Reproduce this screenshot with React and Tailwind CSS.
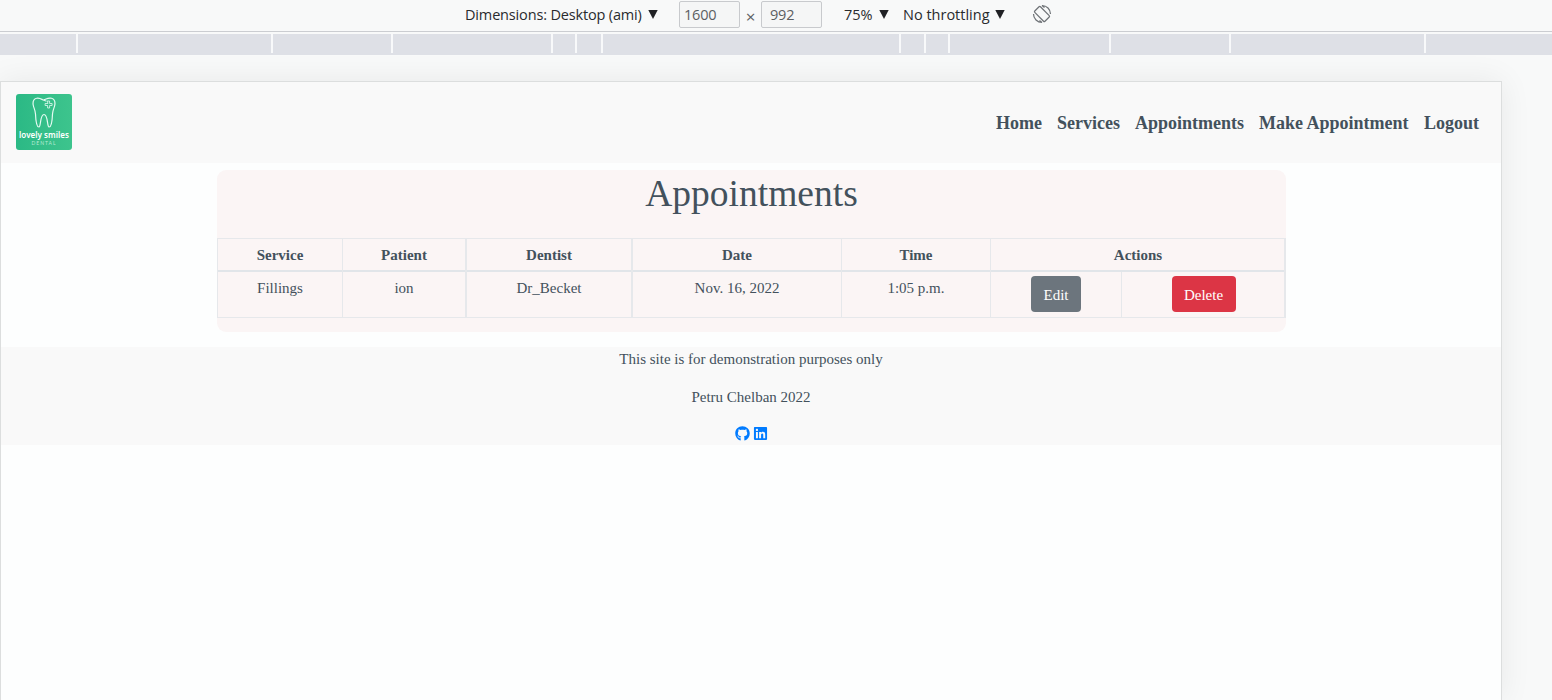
import React from "react";
import { FaGithub, FaLinkedin } from "react-icons/fa";

const ruler = [
  ["w-[76px]", true],
  ["w-[193px]", true],
  ["w-[118px]", true],
  ["w-[158px]", true],
  ["w-[22px]", true],
  ["w-[24px]", true],
  ["w-[296px]", true],
  ["w-[23px]", true],
  ["w-[22px]", true],
  ["w-[159px]", true],
  ["w-[118px]", true],
  ["w-[193px]", true],
  ["w-[126px]", false],
];

const columns = [
  ["Service", "Fillings", "w-[125px]", "border-l"],
  ["Patient", "ion", "w-[123px]", "border-l"],
  ["Dentist", "Dr_Becket", "w-[166px]", "border-l-2"],
  ["Date", "Nov. 16, 2022", "w-[210px]", "border-l-2"],
  ["Time", "1:05 p.m.", "w-[149px]", "border-l"],
];

function Caret() {
  return (
    <svg viewBox="0 0 10 9" className="h-[9px] w-[10px]" fill="#202124">
      <path d="M0.3 0h9.4L5 9z" />
    </svg>
  );
}

function Logo() {
  return (
    <div className="flex h-14 w-14 flex-col items-center overflow-hidden rounded-[3px] bg-gradient-to-r from-[#2bb985] to-[#3dc48d] text-white">
      <svg viewBox="0 0 24 34" className="mt-[2px] h-[34px] w-6 shrink-0" fill="none" stroke="#e4faf1" strokeWidth="1.2" strokeLinecap="round" strokeLinejoin="round">
        <path d="M14 5L10.500 3.600C8.500 2.500 6.500 1.600 4.500 2.300C1.500 3.200.700 6 1.200 9C1.700 12 3.300 14 3.500 18C3.700 23 4 31 6.900 31C9.100 30.500 7.900 18.500 12 18.500C16.100 18.500 14.900 30.500 17.100 31C20 31 20.300 23 20.500 18C20.700 14 22.300 12 22.800 9C23.300 6 22.500 3.200 19.500 2.300C17 1.500 15 2.600 12.500 3.600" />
        <path strokeWidth="0.8" d="M15.600 5h2v2.500h2.500v2h-2.500v2.500h-2v-2.500h-2.500v-2h2.500z" />
      </svg>
      <div className="whitespace-nowrap font-['Noto_Sans',sans-serif] text-[8px] font-semibold leading-[9px] tracking-[0.02px]">lovely smiles</div>
      <div className="pt-px font-['Lato',sans-serif] text-[5px] leading-[7px] tracking-[1px] text-[#b5ead3]">DENTAL</div>
    </div>
  );
}

function Rotate() {
  return (
    <svg viewBox="0 0 20 20" className="h-5 w-5" fill="none" stroke="#6e7276" strokeWidth="1.2">
      <rect x="6" y="2.800" width="8" height="14.400" rx="1" transform="rotate(-45 10 10)" />
      <path d="M10 1.500a8.500 8.500 0 0 1 8.500 8.500M10 18.500A8.500 8.500 0 0 1 1.500 10M10 1.500l2.500 2M10 18.500l-2.500-2" />
    </svg>
  );
}

export default function App() {
  return (
    <div className="flex h-[700px] w-[1552px] flex-col overflow-hidden bg-[#f8f9f9]">
      <div className="flex h-8 shrink-0 items-start border-b border-[#cbcdd1] pl-[465px] font-['Open_Sans',sans-serif] text-[14.500px] leading-[30px] text-[#292b2e]">
        <div className="w-[183px] whitespace-nowrap tracking-[-0.160px]">Dimensions: Desktop (ami)</div>
        <div className="flex h-[28px] w-[31px] items-center"><Caret /></div>
        <div className="mt-px h-[27px] w-[61px] rounded-[2px] border border-[#c8cacd] bg-[#f5f6f6] pl-1 leading-[26px] tracking-[-0.200px] text-[#5c5f62]">1600</div>
        <div className="w-[21px] pt-[2px] text-center text-[17px] text-[#5c5f62]">×</div>
        <div className="mt-px h-[27px] w-[61px] rounded-[2px] border border-[#c8cacd] bg-[#f5f6f6] pl-2 leading-[26px] tracking-[-0.200px] text-[#5c5f62]">992</div>
        <div className="ml-[22px] w-[35px]">75%</div>
        <div className="flex h-[28px] w-[24px] items-center"><Caret /></div>
        <div className="w-[92px] whitespace-nowrap">No throttling</div>
        <div className="flex h-[28px] w-[37px] items-center"><Caret /></div>
        <div className="pt-1"><Rotate /></div>
      </div>
      <div className="mt-[2px] flex h-[21px] shrink-0 gap-[2px] bg-[#dee0e6]">
        {ruler.map(([w, tick], i) => (
          <div key={i} className={`${w} relative shrink-0`}>
            {tick && <span className="absolute left-full top-0 h-[19px] w-[2px] bg-[#f8f9fa]" />}
          </div>
        ))}
      </div>
      <div className="mt-[26px] flex w-[1502px] flex-1 flex-col border border-b-0 border-[#dcdede] bg-[#fdfefe] font-['Liberation_Serif',serif] text-[15px] text-[#43515c] shadow-[0_0_30px_rgba(0,0,0,0.07)]">
        <header className="flex h-[81px] shrink-0 items-start justify-between bg-[#f9f9f9] pl-[15px] pt-3">
          <Logo />
          <nav className="flex pt-[17px] text-[18px] font-bold leading-6">
            <a className="w-[61px]">Home</a>
            <a className="w-[78px]">Services</a>
            <a className="w-[124px]">Appointments</a>
            <a className="w-[165px] whitespace-nowrap">Make Appointment</a>
            <a className="w-[77px]">Logout</a>
          </nav>
        </header>
        <main className="ml-[216px] mt-[7px] flex h-[162px] w-[1069px] shrink-0 flex-col rounded-[9px] bg-[#fbf5f5]">
          <h1 className="h-[68px] text-center text-[37.500px] leading-[47px]">Appointments</h1>
          <div className="flex h-[80px] border-y border-r-2 border-[#e6e8eb] text-center">
            {columns.map(([title, value, w, line]) => (
              <div key={title} className={`${w} ${line} shrink-0 border-[#e6e8eb]`}>
                <div className="h-[33px] border-b-2 border-[#e1e5e9] font-bold leading-[33px]">{title}</div>
                <div className="leading-[33px]">{value}</div>
              </div>
            ))}
            <div className="flex-1 border-l border-[#e6e8eb]">
              <div className="h-[33px] border-b-2 border-[#e1e5e9] pl-px font-bold leading-[33px]">Actions</div>
              <div className="flex h-[45px] text-white">
                <div className="flex w-[130px] justify-center pt-1">
                  <button className="h-9 w-[50px] rounded-[4px] bg-[#6c757d] pt-[3px]">Edit</button>
                </div>
                <div className="flex flex-1 justify-center border-l border-[#e6e8eb] pl-px pt-1">
                  <button className="h-9 w-16 rounded-[4px] bg-[#dc3545] pt-[3px]">Delete</button>
                </div>
              </div>
            </div>
          </div>
        </main>
        <footer className="mt-[15px] flex h-[98px] shrink-0 flex-col items-center bg-[#f9f9f9]">
          <p className="h-[38px] leading-6">This site is for demonstration purposes only</p>
          <p className="h-[41px] leading-6">Petru Chelban 2022</p>
          <div className="flex gap-[3px] text-[15px] text-[#007bff]">
            <FaGithub />
            <FaLinkedin />
          </div>
        </footer>
      </div>
    </div>
  );
}
